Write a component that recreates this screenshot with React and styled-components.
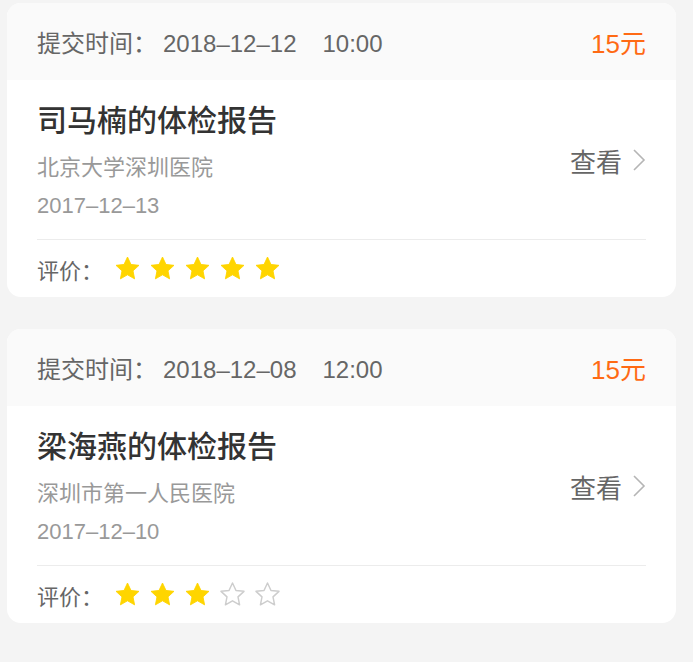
import React from "react";
import styled, { createGlobalStyle } from "styled-components";

const GlobalStyle = createGlobalStyle`
  body {
    margin: 0;
    background: #f4f4f4;
    font-family: "Liberation Sans", "Noto Sans CJK SC", sans-serif;
  }
`;

const List = styled.div`
  display: flex;
  flex-direction: column;
  gap: 32px;
  padding: 3px 17px 40px 7px;
`;

const Card = styled.div`
  background: #fff;
  border-radius: 14px;
  overflow: hidden;
`;

const CardHeader = styled.div`
  display: flex;
  align-items: center;
  justify-content: space-between;
  height: 77px;
  padding: 0 30px;
  background: #fafafa;
`;

const Submitted = styled.span`
  font-size: 24px;
  color: #666;
`;

const SubmitLabel = styled.span`
  margin-right: 6px;
`;

const Time = styled.span`
  margin-left: 26px;
`;

const Price = styled.span`
  font-size: 26px;
  color: #ff6a14;
`;

const CardBody = styled.div`
  padding: 0 30px;
`;

const InfoRow = styled.div`
  display: flex;
  align-items: center;
  justify-content: space-between;
  padding: 21px 0 14px;
  border-bottom: 1px solid #ececec;
`;

const Info = styled.div`
  display: flex;
  flex-direction: column;
`;

const Title = styled.div`
  font-size: 30px;
  line-height: 40px;
  color: #333;
  font-weight: 500;
  margin-bottom: 8px;
`;

const SubText = styled.div`
  font-size: 22px;
  line-height: 38px;
  color: #999;
`;

const ViewLink = styled.a`
  display: flex;
  align-items: center;
  gap: 10px;
  margin-bottom: 6px;
  font-size: 26px;
  color: #666;
  text-decoration: none;
`;

const RatingRow = styled.div`
  display: flex;
  align-items: center;
  height: 57px;
`;

const RatingLabel = styled.span`
  font-size: 22px;
  color: #666;
  margin-right: 11px;
`;

const Stars = styled.div`
  display: flex;
  gap: 8px;
`;

const Chevron = () => (
  <svg width="14" height="24" viewBox="0 0 14 24">
    <path d="M2 2l10 10L2 22" fill="none" stroke="#b5b5b5" strokeWidth="1.6" />
  </svg>
);

const Star = ({ filled }) => (
  <svg width="27" height="27" viewBox="0 0 24 24">
    <path
      d="M12 1.8l3.1 6.6 7.1.8-5.3 4.9 1.4 7.1L12 17.6l-6.3 3.6 1.4-7.1-5.3-4.9 7.1-.8z"
      fill={filled ? "#ffd500" : "none"}
      stroke={filled ? "#ffd500" : "#cdcdcd"}
      strokeWidth={filled ? 0.8 : 1.3}
      strokeLinejoin="round"
    />
  </svg>
);

const reports = [
  {
    date: "2018–12–12",
    time: "10:00",
    price: "15元",
    title: "司马楠的体检报告",
    hospital: "北京大学深圳医院",
    checked: "2017–12–13",
    rating: 5,
  },
  {
    date: "2018–12–08",
    time: "12:00",
    price: "15元",
    title: "梁海燕的体检报告",
    hospital: "深圳市第一人民医院",
    checked: "2017–12–10",
    rating: 3,
  },
];

const App = () => {
  return (
    <>
      <GlobalStyle />
      <List>
        {reports.map((r) => (
          <Card key={r.title}>
            <CardHeader>
              <Submitted>
                <SubmitLabel>提交时间：</SubmitLabel>
                {r.date}
                <Time>{r.time}</Time>
              </Submitted>
              <Price>{r.price}</Price>
            </CardHeader>
            <CardBody>
              <InfoRow>
                <Info>
                  <Title>{r.title}</Title>
                  <SubText>{r.hospital}</SubText>
                  <SubText>{r.checked}</SubText>
                </Info>
                <ViewLink href="#">
                  查看
                  <Chevron />
                </ViewLink>
              </InfoRow>
              <RatingRow>
                <RatingLabel>评价：</RatingLabel>
                <Stars>
                  {[1, 2, 3, 4, 5].map((n) => (
                    <Star key={n} filled={n <= r.rating} />
                  ))}
                </Stars>
              </RatingRow>
            </CardBody>
          </Card>
        ))}
      </List>
    </>
  );
};

export default App;
